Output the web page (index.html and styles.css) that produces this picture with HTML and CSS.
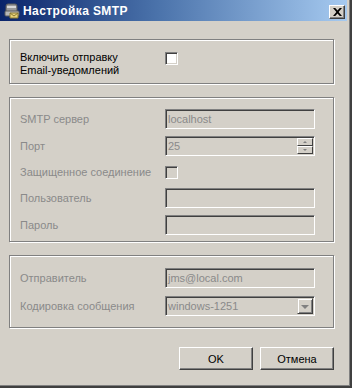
FILE: index.html
```html
<!DOCTYPE html>
<html>
<head>
<meta charset="utf-8">
<link rel="stylesheet" href="styles.css">
</head>
<body>
<div class="window">
  <div class="frame">
    <div class="titlebar">
      <svg class="app-icon" width="16" height="16" viewBox="0 0 16 16">
        <path d="M2 3 Q2 1 4 1 L11 1 Q13 1 13 3 L13 9 L2 9 Z" fill="#9a9a9a" stroke="#5a5a5a" stroke-width="1"/>
        <rect x="3" y="3" width="9" height="2" fill="#d8d8d8"/>
        <rect x="1" y="8" width="14" height="5" rx="1" fill="#b8b8b8" stroke="#5c5c5c" stroke-width="1"/>
        <path d="M6 10 L14 10 L14 15 L6 15 Z" fill="#e8d27a" stroke="#8a7a30" stroke-width="1"/>
        <path d="M6 10 L10 13 L14 10" fill="none" stroke="#8a7a30" stroke-width="1"/>
      </svg>
      <span class="title">Настройка SMTP</span>
      <div class="close-btn">
        <svg width="9" height="8" viewBox="0 0 9 8">
          <path d="M0 0 L2.2 0 L4.5 2.6 L6.8 0 L9 0 L5.6 4 L9 8 L6.8 8 L4.5 5.4 L2.2 8 L0 8 L3.4 4 Z" fill="#000"/>
        </svg>
      </div>
    </div>
    <div class="content">
      <div class="group g1">
        <div class="label-dark">Включить отправку<br>Email-уведомлений</div>
        <div class="checkbox white"></div>
      </div>
      <div class="group g2">
        <div class="row">
          <div class="label">SMTP сервер</div>
          <div class="field"><span class="val">localhost</span></div>
        </div>
        <div class="row">
          <div class="label">Порт</div>
          <div class="field">
            <span class="val">25</span>
            <div class="spin">
              <div class="spin-btn"><span class="arr-up"></span></div>
              <div class="spin-btn"><span class="arr-down"></span></div>
            </div>
          </div>
        </div>
        <div class="row short">
          <div class="label">Защищенное соединение</div>
          <div class="checkbox"></div>
        </div>
        <div class="row">
          <div class="label">Пользователь</div>
          <div class="field"></div>
        </div>
        <div class="row">
          <div class="label">Пароль</div>
          <div class="field"></div>
        </div>
      </div>
      <div class="group g3">
        <div class="row">
          <div class="label">Отправитель</div>
          <div class="field"><span class="val">jms@local.com</span></div>
        </div>
        <div class="row">
          <div class="label">Кодировка сообщения</div>
          <div class="field">
            <span class="val">windows-1251</span>
            <div class="drop-btn"><span class="arr-drop"></span></div>
          </div>
        </div>
      </div>
      <div class="buttons">
        <div class="btn">OK</div>
        <div class="btn">Отмена</div>
      </div>
    </div>
  </div>
</div>
</body>
</html>
```
FILE: styles.css
```css
* { box-sizing: border-box; }
html, body { margin: 0; padding: 0; }
body {
  width: 352px;
  height: 388px;
  background: #d4d0c8;
  font-family: "Liberation Sans", Arial, sans-serif;
  font-size: 11px;
  color: #000;
  overflow: hidden;
}
.window {
  width: 352px;
  height: 388px;
  border-right: 2px solid #404040;
  border-bottom: 2px solid #404040;
  background: #d4d0c8;
}
.frame {
  height: 100%;
  border-right: 1px solid #808080;
  border-bottom: 1px solid #808080;
}
.titlebar {
  height: 21px;
  margin-right: 2px;
  background: linear-gradient(to right, #0a246a 0%, #4a72aa 45%, #a6caf0 100%);
  display: flex;
  align-items: center;
  padding-left: 4px;
}
.app-icon { flex: none; }
.title {
  color: #fff;
  font-weight: bold;
  font-size: 12px;
  margin-left: 3px;
  letter-spacing: 0.4px;
  flex: 1;
}
.close-btn {
  width: 16px;
  height: 14px;
  margin-right: 2px;
  margin-top: 3px;
  background: #d4d0c8;
  border-top: 1px solid #fff;
  border-left: 1px solid #fff;
  border-right: 1px solid #404040;
  border-bottom: 1px solid #404040;
  box-shadow: inset -1px -1px #808080;
  display: flex;
  align-items: center;
  justify-content: center;
  padding-bottom: 1px;
}
.content {
  padding: 18px 0 0 9px;
}
.group {
  width: 325px;
  border: 1px solid #808080;
  box-shadow: inset 1px 1px #fff, 1px 1px #fff;
}
.g1 {
  height: 45px;
  padding: 11px 0 0 10px;
  display: grid;
  grid-template-columns: 145px 13px;
  align-items: start;
}
.label-dark {
  line-height: 13px;
  color: #000;
}
.g1 .checkbox { margin-top: 1px; }
.g2 {
  margin-top: 13px;
  height: 145px;
  padding: 11px 0 0 10px;
  display: flex;
  flex-direction: column;
  gap: 7px;
}
.g3 {
  margin-top: 13px;
  height: 73px;
  padding: 12px 0 0 10px;
  display: flex;
  flex-direction: column;
  gap: 8px;
}
.row {
  display: grid;
  grid-template-columns: 145px 150px;
  align-items: center;
  height: 20px;
}
.row.short { height: 18px; }
.label { color: #8a8a8a; white-space: nowrap; }
.field {
  height: 20px;
  border-top: 1px solid #808080;
  border-left: 1px solid #808080;
  border-right: 1px solid #fff;
  border-bottom: 1px solid #fff;
  box-shadow: inset 1px 1px #404040, inset -1px -1px #d4d0c8;
  padding: 1px;
  display: flex;
  align-items: center;
  color: #8a8a8a;
}
.val { flex: 1; padding-left: 1px; white-space: nowrap; }
.checkbox {
  width: 13px;
  height: 13px;
  border-top: 1px solid #808080;
  border-left: 1px solid #808080;
  border-right: 1px solid #fff;
  border-bottom: 1px solid #fff;
  box-shadow: inset 1px 1px #404040, inset -1px -1px #d4d0c8;
  background: #d4d0c8;
}
.checkbox.white { background: #fff; }
.spin {
  width: 16px;
  height: 16px;
  display: flex;
  flex-direction: column;
}
.spin-btn {
  height: 8px;
  background: #d4d0c8;
  border-top: 1px solid #fff;
  border-left: 1px solid #fff;
  border-right: 1px solid #404040;
  border-bottom: 1px solid #404040;
  display: flex;
  align-items: center;
  justify-content: center;
}
.arr-up {
  width: 0; height: 0;
  border-left: 2px solid transparent;
  border-right: 2px solid transparent;
  border-bottom: 2px solid #808080;
}
.arr-down {
  width: 0; height: 0;
  border-left: 2px solid transparent;
  border-right: 2px solid transparent;
  border-top: 2px solid #808080;
}
.drop-btn {
  width: 16px;
  height: 16px;
  background: #d4d0c8;
  border-top: 1px solid #d4d0c8;
  border-left: 1px solid #d4d0c8;
  border-right: 1px solid #404040;
  border-bottom: 1px solid #404040;
  box-shadow: inset 1px 1px #fff, inset -1px -1px #808080;
  display: flex;
  align-items: center;
  justify-content: center;
}
.arr-drop {
  width: 0; height: 0;
  border-left: 4px solid transparent;
  border-right: 4px solid transparent;
  border-top: 4px solid #808080;
  margin-top: 1px;
}
.buttons {
  width: 325px;
  margin-top: 19px;
  display: flex;
  justify-content: flex-end;
  gap: 7px;
}
.btn {
  width: 74px;
  height: 23px;
  background: #d4d0c8;
  border-top: 1px solid #fff;
  border-left: 1px solid #fff;
  border-right: 1px solid #404040;
  border-bottom: 1px solid #404040;
  box-shadow: inset -1px -1px #808080;
  display: flex;
  align-items: center;
  justify-content: center;
  color: #000;
}
```
